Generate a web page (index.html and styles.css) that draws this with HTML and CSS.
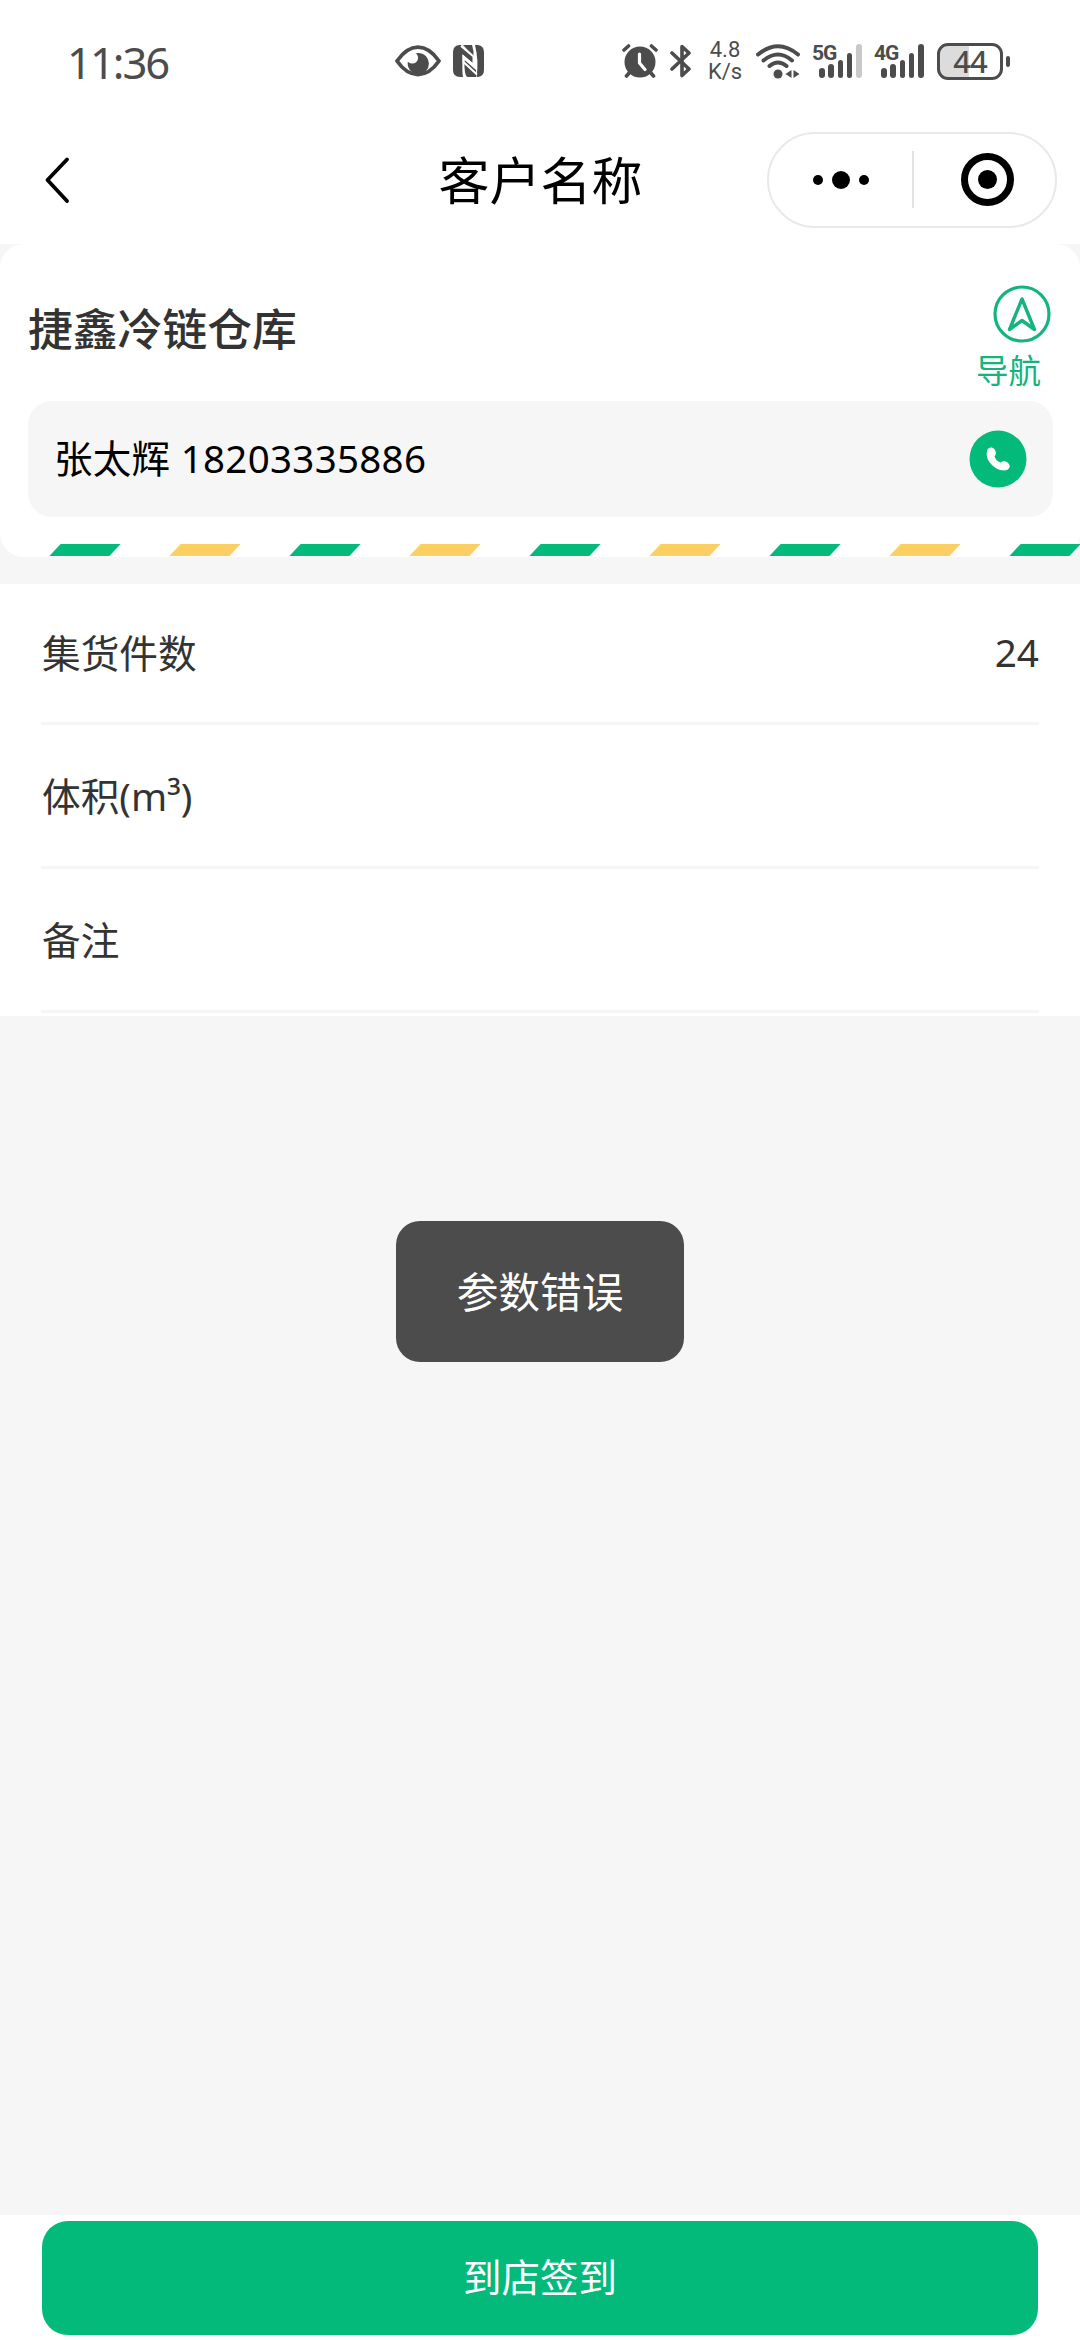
FILE: index.html
```html
<!DOCTYPE html>
<html lang="zh-CN">

<head>
  <meta charset="UTF-8">
  <meta name="viewport" content="width=device-width, initial-scale=1.0">
  <title>客户名称</title>
  <link rel="stylesheet" href="styles.css">
</head>

<body>
  <div class="page">
    <!-- 状态栏 -->
    <div class="status-bar">
      <div class="time">11:36</div>
      <div class="status-left">
        <svg width="46" height="32" viewBox="0 0 46 32">
          <path d="M2 16C9 6 16 2.200 23 2.200S37 6 44 16C37 26 30 29.500 23 29.500S9 26 2 16Z" fill="none" stroke="#4c4c4c" stroke-width="3.800" stroke-linejoin="round"/>
          <circle cx="23.300" cy="18.500" r="10.600" fill="#4c4c4c"/>
          <circle cx="17.300" cy="12.800" r="5.800" fill="#fff"/>
        </svg>
        <svg width="31" height="32" viewBox="0 0 31 32">
          <path d="M6 0H8L20.500 10.500V19L9.500 9.500C9.500 19 9 26 10 32H7Q0 32 0 25V7Q0 1 6 0Z" fill="#4c4c4c"/>
          <path d="M10 0H19Q21 6 20.500 11Z" fill="#4c4c4c"/>
          <path d="M11.500 15L23 25V32H15Q11 32 11.500 15Z" fill="#4c4c4c"/>
          <path d="M22 0H25Q31 1 31 7V25Q31 31 25 32H23.500Q26 16 22 0Z" fill="#4c4c4c"/>
          <path d="M8 1L20.500 11.500V20L10.500 11.500V17L24 29.500" fill="none" stroke="#fff" stroke-width="2"/>
        </svg>
      </div>
      <div class="status-right">
        <svg class="alarm" width="36" height="34" viewBox="0 0 36 34">
          <circle cx="18" cy="18" r="15.500" fill="#4c4c4c"/>
          <path d="M2 6L6.500 2M34 6L29.500 2M8 28L4.500 32M28 28L31.500 32" stroke="#4c4c4c" stroke-width="3.600" stroke-linecap="round"/>
          <path d="M17.500 10V19L23 25.500" fill="none" stroke="#fff" stroke-width="3.200" stroke-linecap="round" stroke-linejoin="round"/>
        </svg>
        <svg class="bluetooth" width="22" height="34" viewBox="0 0 22 34">
          <path d="M2 9L19 25L12 31.500V2.500L19 9L2 25" fill="none" stroke="#4c4c4c" stroke-width="3.600" stroke-linecap="round" stroke-linejoin="round"/>
        </svg>
        <div class="speed"><span>4.8</span><span>K/s</span></div>
        <svg class="wifi" width="44" height="35" viewBox="0 0 44 35">
          <path d="M2 10.500Q22-6 42 10.500M7.500 16.500Q22 4.500 36 16.500M13.500 22Q22 15 30.500 22" fill="none" stroke="#4c4c4c" stroke-width="4" stroke-linecap="round"/>
          <circle cx="22" cy="30" r="4.500" fill="#4c4c4c"/>
          <path d="M35.500 26V34L29.500 30ZM37.500 26V34L43.500 30Z" fill="#4c4c4c"/>
        </svg>
        <div class="signal">
          <b>5G</b>
          <i class="s1"></i><i class="s2"></i><i class="s3"></i><i class="s4"></i><i class="s5 off"></i>
        </div>
        <div class="signal">
          <b>4G</b>
          <i class="s1"></i><i class="s2"></i><i class="s3"></i><i class="s4"></i><i class="s5"></i>
        </div>
        <div class="battery">44</div>
        <div class="battery-tip"></div>
      </div>
    </div>

    <!-- 导航栏 -->
    <div class="nav-bar">
      <svg class="back" width="30" height="50" viewBox="0 0 30 50">
        <path d="M25 4.500L5.500 25L25 46" fill="none" stroke="#000" stroke-width="3.800" stroke-linecap="round" stroke-linejoin="round"/>
      </svg>
      <div class="nav-title">客户名称</div>
      <div class="capsule">
        <div class="dots"><i></i><i class="big"></i><i></i></div>
        <div class="capsule-line"></div>
        <div class="close"><i></i></div>
      </div>
    </div>

    <!-- 客户信息 -->
    <div class="customer">
      <div class="customer-head">
        <div class="customer-name">捷鑫冷链仓库</div>
        <div class="guide">
          <svg width="58" height="58" viewBox="0 0 58 58">
            <circle cx="29" cy="29" r="27" fill="none" stroke="#16b47d" stroke-width="3.200"/>
            <path d="M29 14L16.500 44.500L29 35.500L41.500 44.500Z" fill="none" stroke="#16b47d" stroke-width="3.400" stroke-linejoin="round"/>
          </svg>
          <span>导航</span>
        </div>
      </div>
      <div class="contact">
        <span>张太辉 18203335886</span>
        <svg width="58" height="58" viewBox="0 0 58 58">
          <circle cx="29" cy="29" r="28.500" fill="#03ba7b"/>
          <path d="M18.500 19.500C21 16.500 24.500 17 26 20C27.500 23 27 24.500 25.500 26.500C26.500 29.500 28.500 31.500 31.500 32.500C34 30.500 36 30.500 38.500 32.500C42 35.500 41 38.500 38 40C29 43 14 31 18.500 19.500Z" fill="#fff"/>
        </svg>
      </div>
      <div class="stripes">
        <i></i><i></i><i></i><i></i><i></i><i></i><i></i><i></i><i></i>
      </div>
    </div>

    <!-- 表单 -->
    <div class="form">
      <div class="row"><span>集货件数</span><span class="value">24</span></div>
      <div class="row"><span>体积(m³)</span></div>
      <div class="row"><span>备注</span></div>
    </div>

    <!-- 底部按钮 -->
    <div class="footer">
      <button class="btn">到店签到</button>
    </div>

    <!-- 提示 -->
    <div class="toast">参数错误</div>
  </div>
</body>

</html>
```

FILE: styles.css
```css
* {
  box-sizing: border-box;
}

body {
  margin: 0;
  background: #f6f6f6;
  font-family: "Noto Sans", "Noto Sans CJK SC", sans-serif;
  color: #333;
}

svg {
  display: block;
  flex-shrink: 0;
}

i {
  display: block;
}

.page {
  width: 1080px;
  height: 2340px;
  display: flex;
  flex-direction: column;
  overflow: hidden;
}

/* 状态栏 */
.status-bar {
  height: 122px;
  background: #fff;
  display: grid;
  grid-template-columns: 328px 227px 1fr;
  align-items: center;
  padding-left: 67px;
  color: #4c4c4c;
}

.time {
  padding-top: 2px;
  font-size: 43.500px;
  line-height: 60px;
  letter-spacing: -2px;
}

.status-left {
  display: flex;
  align-items: center;
  gap: 12px;
}

.status-right {
  display: flex;
  align-items: center;
}

.bluetooth {
  margin-left: 12px;
}

.speed {
  width: 36px;
  margin-left: 15px;
  display: flex;
  flex-direction: column;
  align-items: center;
  font-family: Roboto, sans-serif;
  font-size: 22px;
  line-height: 22px;
}

.wifi {
  margin-left: 13px;
}

.signal {
  position: relative;
  width: 50px;
  height: 34px;
  margin-left: 12px;
  padding-left: 7px;
  display: flex;
  align-items: flex-end;
  gap: 3.7px;
}

.signal b {
  position: absolute;
  left: 0;
  top: -3px;
  font-family: Roboto, sans-serif;
  font-size: 21px;
  line-height: 24px;
  letter-spacing: -1px;
}

.signal i {
  width: 5.600px;
  border-radius: 3px;
  background: #4c4c4c;
}

.s1 { height: 10px; }
.s2 { height: 14px; }
.s3 { height: 18px; }
.s4 { height: 25px; }
.s5 { height: 34px; }

.signal .off {
  background: #c9c9c9;
}

.battery {
  width: 66px;
  height: 37px;
  margin-left: 13px;
  border: 3px solid #4c4c4c;
  border-radius: 11px;
  background: linear-gradient(90deg, #dcdcdc 49%, #fff 49%);
  font-size: 31px;
  font-weight: 500;
  letter-spacing: -1px;
  line-height: 31px;
  text-align: center;
}

.battery-tip {
  width: 4px;
  height: 11px;
  margin-left: 3px;
  border-radius: 2px;
  background: #4c4c4c;
}

/* 导航栏 */
.nav-bar {
  height: 122px;
  background: #fff;
  display: grid;
  grid-template-columns: 1fr auto 1fr;
  align-items: center;
  padding: 0 23px 7px 42px;
}

.nav-title {
  padding-right: 18px;
  font-size: 51px;
  line-height: 72px;
  color: #000;
}

.capsule {
  justify-self: end;
  width: 290px;
  height: 96px;
  border: 2px solid #e9e9e9;
  border-radius: 48px;
  display: flex;
  align-items: center;
}

.dots {
  width: 143px;
  display: flex;
  align-items: center;
  justify-content: center;
  gap: 9px;
}

.dots i {
  width: 10px;
  height: 10px;
  border-radius: 50%;
  background: #000;
}

.dots .big {
  width: 18px;
  height: 18px;
}

.capsule-line {
  width: 2px;
  height: 57px;
  background: #e2e2e2;
}

.close {
  width: 53px;
  height: 53px;
  margin-left: 47px;
  border: 7px solid #000;
  border-radius: 50%;
  display: flex;
  align-items: center;
  justify-content: center;
}

.close i {
  width: 19px;
  height: 19px;
  border-radius: 50%;
  background: #000;
}

/* 客户信息 */
.customer {
  height: 313px;
  padding: 41px 28px 0;
  background: #fff;
  border-radius: 24px;
}

.customer-head {
  height: 116px;
  display: flex;
  justify-content: space-between;
}

.customer-name {
  font-size: 44.800px;
  font-weight: 500;
  line-height: 87px;
}

.guide {
  display: flex;
  flex-direction: column;
  align-items: flex-end;
  font-size: 32.500px;
  line-height: 50px;
  color: #16b47d;
}

.guide svg {
  margin-right: 1px;
}

.guide span {
  margin: 3px 11px 0 0;
}

.contact {
  width: 1025px;
  height: 116px;
  padding: 0 26px;
  border-radius: 24px;
  background: #f6f6f6;
  display: flex;
  align-items: center;
  justify-content: space-between;
  font-size: 38.500px;
  letter-spacing: 0.3px;
  color: #000;
}

.contact span {
  padding-bottom: 6px;
}

.stripes {
  margin: 27px -28px 0;
  padding-left: 54.500px;
  display: flex;
  gap: 60px;
}

.stripes i {
  width: 60px;
  height: 12px;
  flex-shrink: 0;
  background: #03ba7b;
  transform: skewX(-43deg);
}

.stripes i:nth-child(even) {
  background: #fccf63;
}

/* 表单 */
.form {
  margin-top: 27px;
  padding: 0 41px 3px;
  background: #fff;
}

.row {
  height: 144px;
  padding: 0 0 4px 1px;
  border-bottom: 3px solid #f5f5f5;
  display: flex;
  align-items: center;
  justify-content: space-between;
  font-size: 38.700px;
}

.row:first-child {
  height: 141px;
}

.value {
  padding-top: 2px;
}

/* 底部按钮 */
.footer {
  height: 125px;
  margin-top: auto;
  padding: 6px 42px;
  background: #fff;
}

.btn {
  width: 100%;
  height: 114px;
  border: none;
  border-radius: 26px;
  background: #03ba7b;
  color: #fff;
  font-family: inherit;
  font-size: 38.500px;
  padding: 0 0 6px;
}

/* 提示 */
.toast {
  position: fixed;
  left: 50%;
  top: 1221px;
  width: 288px;
  height: 141px;
  margin-left: -144px;
  border-radius: 24px;
  background: #4c4c4c;
  color: #fff;
  font-size: 41.700px;
  line-height: 142px;
  text-align: center;
}
```
